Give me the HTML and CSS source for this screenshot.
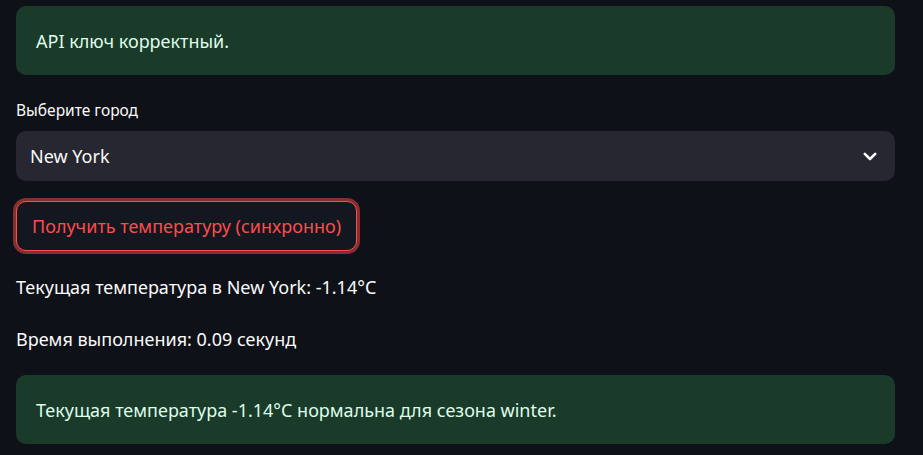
FILE: index.html
```html
<!DOCTYPE html>
<html lang="ru">
<head>
<meta charset="utf-8">
<link rel="stylesheet" href="styles.css">
</head>
<body>
<main class="app">
  <div class="alert">API ключ корректный.</div>
  <div class="field">
    <label class="label">Выберите город</label>
    <div class="select">
      <span class="select-value">New York</span>
      <svg class="chevron" width="14" height="9" viewBox="0 0 14 9"><polyline points="1.8,1.8 7,7 12.2,1.8" fill="none" stroke="#fafafa" stroke-width="2.6" stroke-linecap="round" stroke-linejoin="round"/></svg>
    </div>
  </div>
  <div class="btn-wrap"><button class="btn">Получить температуру (синхронно)</button></div>
  <p class="text">Текущая температура в New York: -1.14°C</p>
  <p class="text">Время выполнения: 0.09 секунд</p>
  <div class="alert">Текущая температура -1.14°C нормальна для сезона winter.</div>
</main>
</body>
</html>
```

FILE: styles.css
```css
html, body {
  margin: 0;
  padding: 0;
  background: #0e1117;
}
body {
  font-family: "Noto Sans", "Open Sans", sans-serif;
  color: #fafafa;
  font-size: 18px;
}
.app {
  display: flex;
  flex-direction: column;
  gap: 20px;
  padding: 6px 28px 0 16px;
}
.alert {
  background: #1a3a2a;
  color: #dffde9;
  border-radius: 10px;
  height: 69px;
  box-sizing: border-box;
  padding: 0 20px;
  display: flex;
  align-items: center;
}
.field {
  display: flex;
  flex-direction: column;
}
.label {
  font-size: 15.5px;
  height: 30px;
  margin-bottom: 6px;
  display: flex;
  align-items: center;
}
.select {
  height: 50px;
  background: #262730;
  border-radius: 10px;
  display: flex;
  align-items: center;
  justify-content: space-between;
  padding: 0 18px 0 14px;
}
.chevron {
  display: block;
  margin-top: 1px;
}
.btn-wrap {
  display: flex;
}
.btn {
  height: 50px;
  padding: 0 15px;
  font-family: inherit;
  font-size: 18px;
  color: #ff4b4b;
  background: #131720;
  border: 1px solid #ff4b4b;
  border-radius: 10px;
  box-shadow: 0 0 0 3px rgba(255, 75, 75, 0.5);
}
.text {
  margin: 0;
  height: 32px;
  line-height: 32px;
}
```
